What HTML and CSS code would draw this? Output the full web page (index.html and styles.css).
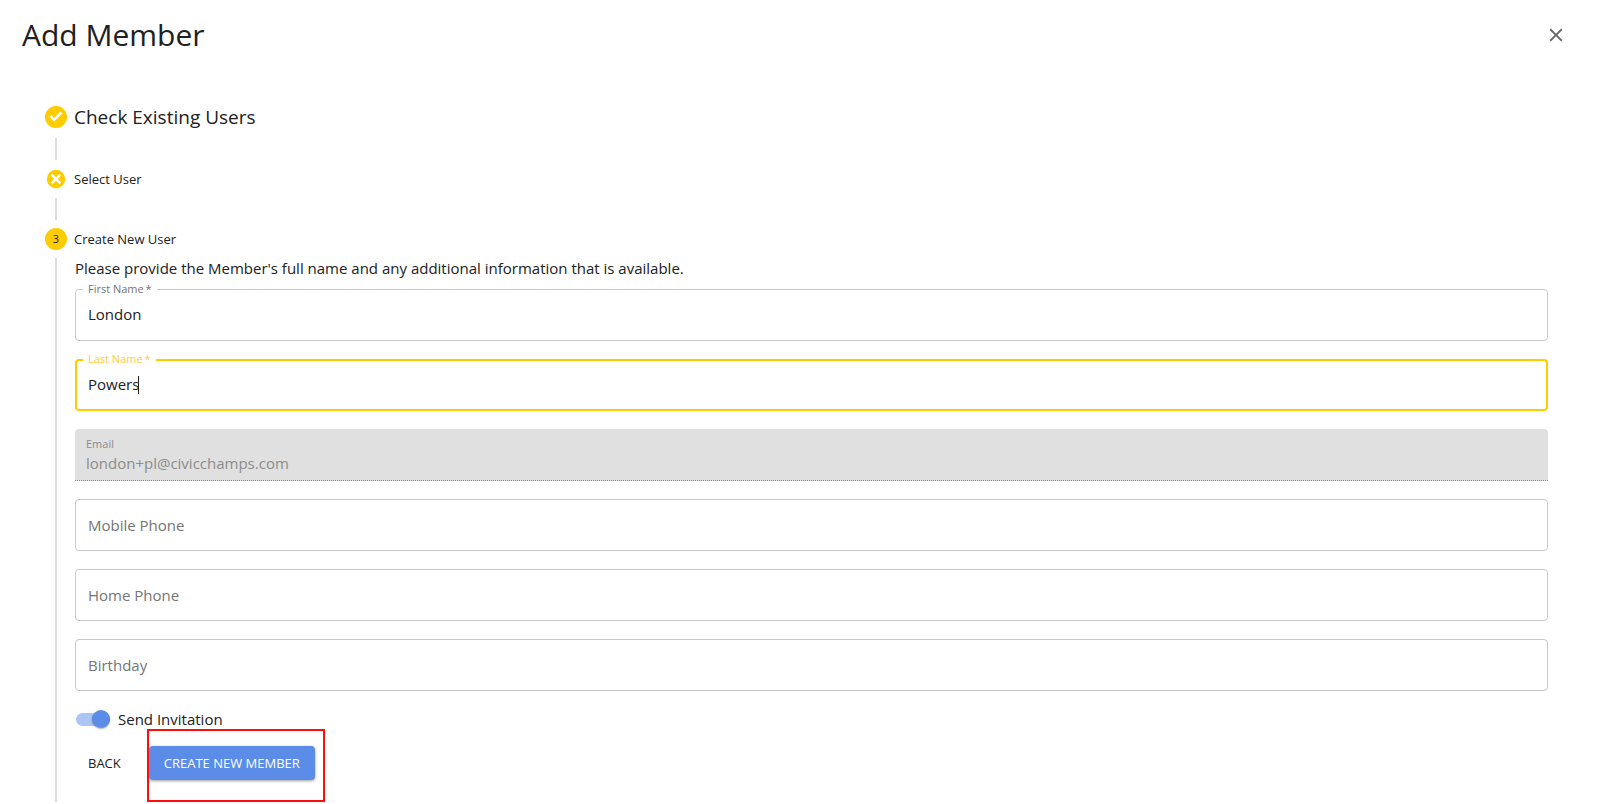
FILE: index.html
```html
<!DOCTYPE html>
<html lang="en">
<head>
    <meta charset="UTF-8">
    <meta name="viewport" content="width=device-width, initial-scale=1.0">
    <title>Add Member</title>
    <link rel="stylesheet" href="styles.css">
</head>
<body>
    <header class="header">
        <h1>Add Member</h1>
        <button class="close-button" type="button" aria-label="Close">
            <svg viewBox="0 0 24 24" width="22" height="22"><path d="M19 6.41L17.59 5 12 10.59 6.41 5 5 6.41 10.59 12 5 17.59 6.41 19 12 13.41 17.59 19 19 17.59 13.41 12z"/></svg>
        </button>
    </header>

    <main class="stepper">
        <div class="step step-large">
            <svg class="step-icon" viewBox="0 0 24 24"><path d="M12 0a12 12 0 1 0 0 24 12 12 0 0 0 0-24zm-2 17l-5-5 1.9-1.9 3.1 3.1 7.1-7.1L19 8l-9 9z"/></svg>
            <h2>Check Existing Users</h2>
        </div>
        <div class="connector"></div>
        <div class="step">
            <svg class="step-icon" viewBox="0 0 24 24"><circle cx="12" cy="12" r="10"/><path class="cross" d="M7.3 7.3l9.4 9.4M16.7 7.3l-9.4 9.4"/></svg>
            <span>Select User</span>
        </div>
        <div class="connector"></div>
        <div class="step">
            <span class="step-icon step-number">3</span>
            <span>Create New User</span>
        </div>

        <form class="step-content">
            <p>Please provide the Member's full name and any additional information that is available.</p>

            <div class="fields">
                <div class="field">
                    <input type="text" id="firstName" value="London" required>
                    <label for="firstName">First Name&#8201;*</label>
                </div>
                <div class="field focused">
                    <input type="text" id="lastName" value="Powers" required>
                    <label for="lastName">Last Name&#8201;*</label>
                    <span class="caret"></span>
                </div>
                <div class="field filled">
                    <input type="email" id="email" value="london+pl@civicchamps.com" disabled>
                    <label for="email">Email</label>
                </div>
                <div class="field empty">
                    <input type="tel" id="mobilePhone">
                    <label for="mobilePhone">Mobile Phone</label>
                </div>
                <div class="field empty">
                    <input type="tel" id="homePhone">
                    <label for="homePhone">Home Phone</label>
                </div>
                <div class="field empty">
                    <input type="text" id="birthday">
                    <label for="birthday">Birthday</label>
                </div>
            </div>

            <label class="switch">
                <input type="checkbox" checked>
                <span>Send Invitation</span>
            </label>

            <div class="actions">
                <button class="back-button" type="button">BACK</button>
                <div class="highlight">
                    <button class="create-button" type="button">CREATE NEW MEMBER</button>
                </div>
            </div>
        </form>
    </main>
</body>
</html>
```
FILE: styles.css
```css
* {
    box-sizing: border-box;
}
body {
    margin: 0;
    font-family: "Open Sans", sans-serif;
    font-size: 15px;
    color: #212121;
    background-color: white;
}
h1, h2, p {
    margin: 0;
    font-weight: 400;
}
button, input {
    font-family: inherit;
    font-size: inherit;
}
.header {
    display: flex;
    justify-content: space-between;
    align-items: center;
    height: 70px;
    padding: 0 33px 0 22px;
}
h1 {
    font-size: 30px;
    line-height: 44px;
}
.close-button {
    display: flex;
    padding: 0;
    border: none;
    background: none;
    cursor: pointer;
}
.close-button svg {
    fill: #666;
}
.stepper {
    padding: 34px 52px 2px 45px;
}
.step {
    display: flex;
    align-items: center;
    gap: 7px;
    height: 22px;
    font-size: 13px;
}
.step-large {
    height: 26px;
}
h2 {
    font-size: 19px;
}
.step-icon {
    width: 22px;
    height: 22px;
    fill: #ffcc00;
}
.cross {
    stroke: white;
    stroke-width: 2.6;
}
.step-number {
    border-radius: 50%;
    background-color: #ffcc00;
    font-size: 11px;
    line-height: 22px;
    text-align: center;
}
.connector {
    width: 2px;
    height: 22px;
    margin: 8px 10px;
    background-color: #dcdcdc;
}
.step-content {
    margin: 8px 0 0 10px;
    padding: 0 0 22px 18px;
    border-left: 2px solid #dcdcdc;
}
.step-content p {
    line-height: 20px;
}
.fields {
    display: grid;
    gap: 18px;
    margin: 11px 0 18px;
}
.field {
    position: relative;
    height: 52px;
}
.field input {
    width: 100%;
    height: 100%;
    padding: 0 12px 2px;
    border: 1px solid #c8c8c8;
    border-radius: 4px;
    background-color: white;
    color: #212121;
    outline: none;
}
.field label {
    position: absolute;
    top: -8px;
    left: 8px;
    padding: 0 5px;
    background-color: white;
    color: #757575;
    font-size: 11px;
    line-height: 16px;
}
.field.focused input {
    padding: 0 11px 2px;
    border: 2px solid #ffcc00;
}
.field.focused label {
    color: #ffcc33;
}
.caret {
    position: absolute;
    top: 17px;
    left: 63px;
    width: 1px;
    height: 18px;
    background-color: #212121;
}
.field.filled input {
    padding: 16px 11px 0;
    border: none;
    border-bottom: 1px dotted #888;
    border-radius: 4px 4px 0 0;
    background-color: #e0e0e0;
    color: #8c8c8c;
}
.field.filled label {
    top: 7px;
    left: 11px;
    padding: 0;
    background: none;
    color: #8c8c8c;
}
.field.empty label {
    top: 16px;
    font-size: 15px;
    line-height: 20px;
}
.switch {
    display: flex;
    align-items: center;
    gap: 8px;
    height: 20px;
}
.switch input {
    appearance: none;
    display: flex;
    align-items: center;
    justify-content: flex-end;
    width: 34px;
    height: 13px;
    margin: 0 0 0 1px;
    border-radius: 7px;
    background-color: #adc5f3;
}
.switch input::before {
    content: "";
    flex: none;
    width: 18px;
    height: 18px;
    border-radius: 50%;
    background-color: #5b8de8;
    box-shadow: 0 1px 2px rgba(0,0,0,0.35);
}
.actions {
    display: flex;
    gap: 15px;
    margin-top: 17px;
}
.back-button, .create-button {
    height: 34px;
    border: none;
    border-radius: 4px;
    font-size: 13px;
    cursor: pointer;
}
.back-button {
    padding: 0 13px;
    background: none;
    color: #212121;
}
.highlight {
    position: relative;
}
/* Red frame round the main action */
.highlight::after {
    content: "";
    position: absolute;
    inset: -17px -10px -22px -2px;
    border: 2px solid #ff0d0d;
    pointer-events: none;
}
.create-button {
    padding: 0 15px;
    background-color: #5b8de8;
    color: white;
    box-shadow: 0 1px 3px rgba(0,0,0,0.4);
}
```
